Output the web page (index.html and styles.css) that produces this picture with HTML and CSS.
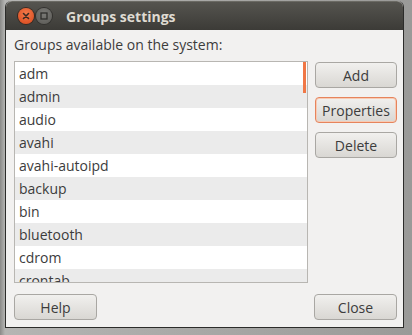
FILE: index.html
```html
<!DOCTYPE html>
<html lang="en">
<head>
<meta charset="UTF-8">
<title>Groups settings</title>
<link rel="stylesheet" href="styles.css">
</head>
<body>
<div class="window">
    <div class="titlebar">
        <span class="btn-close"><svg width="16" height="16" viewBox="0 0 16 16"><path d="M5.5 5.5l5 5M10.5 5.5l-5 5" stroke="#3a2a22" stroke-width="1.6" stroke-linecap="round"/></svg></span>
        <span class="btn-max"><svg width="16" height="16" viewBox="0 0 16 16"><rect x="5" y="5" width="6" height="6" fill="none" stroke="#2e2e2b" stroke-width="1.3"/></svg></span>
        <h1>Groups settings</h1>
    </div>
    <div class="content">
        <p class="label">Groups available on the system:</p>
        <div class="main">
            <div class="list">
                <div class="row">adm</div>
                <div class="row">admin</div>
                <div class="row">audio</div>
                <div class="row">avahi</div>
                <div class="row">avahi-autoipd</div>
                <div class="row">backup</div>
                <div class="row">bin</div>
                <div class="row">bluetooth</div>
                <div class="row">cdrom</div>
                <div class="row">crontab</div>
                <span class="scroll"></span>
            </div>
            <div class="side">
                <button class="btn">Add</button>
                <button class="btn focus">Properties</button>
                <button class="btn">Delete</button>
            </div>
        </div>
        <div class="footer">
            <button class="btn wide">Help</button>
            <button class="btn wide">Close</button>
        </div>
    </div>
</div>
</body>
</html>
```
FILE: styles.css
```css
html, body {margin: 0; height: 100%;}
body {background: linear-gradient(90deg, #8a8a88 0, #b5b5b3 5px, #9a9a98 100%); font-family: "Open Sans", "Liberation Sans", sans-serif; color: #3c3c3c; overflow: hidden;}
.window {margin: 1px 0 0 5px; width: 399px; height: 327px; border: 1px solid #2c2c2a; border-top: 0; border-radius: 6px 6px 0 0; background: #f2f1f0; display: flex; flex-direction: column; box-sizing: border-box;}
.titlebar {height: 28px; display: flex; align-items: center; padding-left: 12px; background: linear-gradient(#55544f, #3c3b37); border-radius: 6px 6px 0 0; border-top: 1px solid #6b6a64;}
.titlebar h1 {margin: 0 0 0 12px; font-size: 14px; font-weight: bold; color: #dfdbd2;}
.btn-close, .btn-max {width: 16px; height: 16px; border-radius: 50%; margin-right: 2px; display: flex;}
.btn-close {background: radial-gradient(circle at 50% 35%, #f27a4a, #d9461a); box-shadow: 0 0 0 1px #3a2a22;}
.btn-max {background: radial-gradient(circle at 50% 35%, #7a7a76, #5a5955); box-shadow: 0 0 0 1px #33322f;}
.content {flex: 1; display: flex; flex-direction: column; padding: 6px 6px 7px 8px;}
.label {margin: 0 0 8px; font-size: 14px; line-height: 17px;}
.main {display: flex; gap: 7px;}
.list {position: relative; width: 294px; height: 222px; border: 1px solid #b8b6b2; background: #fff; overflow: hidden; box-sizing: border-box;}
.row {height: 23px; line-height: 23px; padding-left: 4px; font-size: 14px; color: #3c3c3c;}
.row:nth-child(even) {background: #ebebeb;}
.scroll {position: absolute; top: 0; right: 1px; width: 3px; height: 31px; background: #f07746;}
.side {display: flex; flex-direction: column; gap: 9px; padding-top: 1px;}
.btn {width: 82px; height: 26px; border: 1px solid #a9a7a3; border-radius: 4px; background: linear-gradient(#f1f0ee, #d9d7d3); font-family: inherit; font-size: 14px; color: #3c3c3c; padding: 0;}
.btn.focus {border-color: #e6845c; box-shadow: inset 0 0 0 1px #f7cbb5;}
.footer {margin-top: auto; display: flex; justify-content: space-between;}
.btn.wide {width: 83px;}
```
